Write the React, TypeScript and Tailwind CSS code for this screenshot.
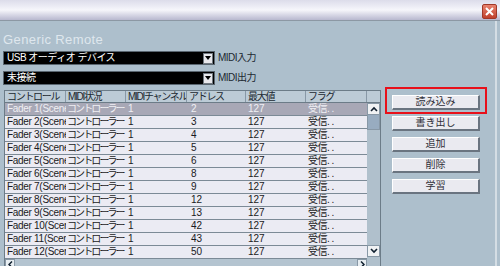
const rows = [
  { name: "Fader 1(Scene 1)", addr: "2" },
  { name: "Fader 2(Scene 1)", addr: "3" },
  { name: "Fader 3(Scene 1)", addr: "4" },
  { name: "Fader 4(Scene 1)", addr: "5" },
  { name: "Fader 5(Scene 1)", addr: "6" },
  { name: "Fader 6(Scene 1)", addr: "8" },
  { name: "Fader 7(Scene 1)", addr: "9" },
  { name: "Fader 8(Scene 1)", addr: "12" },
  { name: "Fader 9(Scene 1)", addr: "13" },
  { name: "Fader 10(Scene 1)", addr: "42" },
  { name: "Fader 11(Scene 1)", addr: "43" },
  { name: "Fader 12(Scene 1)", addr: "50" },
];

const cols = ["コントロール", "MIDI状況", "MIDIチャンネル", "アドレス", "最大値", "フラグ"];
const widths = ["w-[61px]", "w-[60px]", "w-[61px]", "w-[59px]", "w-[60px]", "w-[61px]"];

const font = { fontFamily: '"Liberation Sans", "Noto Sans CJK JP", sans-serif' };

const Dropdown = ({ value, label }: { value: string; label: string }) => (
  <div className="flex items-center h-[14px] gap-[3px]">
    <div className="w-[212px] h-[14px] bg-black border border-[#5a6670] flex items-center justify-between">
      <span className="text-white text-[10px] pl-[3px] leading-none tracking-[-0.5px]">{value}</span>
      <span className="w-[10px] h-[11px] bg-[#e8e8ec] border border-[#707880] flex items-center justify-center mr-[1px]">
        <svg width="6" height="4" viewBox="0 0 6 4"><path d="M0 0h6L3 4z" fill="#000" /></svg>
      </span>
    </div>
    <span className="text-[10px] text-[#202830] leading-none tracking-[-0.5px]">{label}</span>
  </div>
);

const Btn = ({ text }: { text: string }) => (
  <div className="w-[88px] h-[15px] bg-[#eaeaf0] border-t border-l border-[#ffffff] border-r-2 border-b-2 border-r-[#6a7480] border-b-[#6a7480] flex items-center justify-center text-[10px] text-[#303038] leading-none">
    {text}
  </div>
);

const Arrow = ({ d }: { d: string }) => (
  <svg width="8" height="6" viewBox="0 0 8 6"><path d={d} stroke="#102030" strokeWidth="1.6" fill="none" /></svg>
);

const cellClass = [
  "tracking-[-0.3px] pl-[2px]",
  "tracking-[-1.9px] pl-[1px]",
  "pl-[2px]",
  "pl-[4px]",
  "pl-[2px]",
  "tracking-[-0.5px] pl-[2px]",
];

export default function App() {
  return (
    <div className="w-[500px] h-[266px] overflow-hidden flex flex-col bg-[#adbfcc]" style={font}>
      <div className="h-[21px] shrink-0 bg-gradient-to-b from-[#dcdcea] via-[#f6f6fb] to-[#b8b8cf] border-b border-[#8c98a4] flex justify-end items-start pr-[3px] pt-[4px]">
        <div className="w-[15px] h-[15px] rounded-[2px] bg-gradient-to-b from-[#e8826e] to-[#c0402c] border border-[#a03828] flex items-center justify-center">
          <svg width="9" height="9" viewBox="0 0 9 9"><path d="M1 1l7 7M8 1L1 8" stroke="#fff" strokeWidth="2" /></svg>
        </div>
      </div>
      <div className="flex-1 flex border-r-2 border-[#d4dde4] mr-[3px] pl-[3px]">
        <div className="flex flex-col">
          <div className="text-[13px] text-[#dfe7ee] leading-none mt-[12px] tracking-[0.4px]">Generic Remote</div>
          <div className="mt-[5px] flex flex-col gap-[6px]">
            <Dropdown value="USB オーディオ デバイス" label="MIDI入力" />
            <Dropdown value="未接続" label="MIDI出力" />
          </div>
          <div className="mt-[5px] ml-[1px] flex">
            <div className="flex flex-col w-[363px] border-l border-t border-[#6c7c88]">
              <div className="flex h-[12px] bg-[#bccbd6] border-b border-[#6c7c88]">
                {cols.map((c, i) => (
                  <div key={c} className={`${widths[i]} shrink-0 border-r border-[#8898a6] text-[10px] text-[#202830] leading-[12px] pl-[2px] whitespace-nowrap overflow-hidden tracking-[-1.3px]`}>
                    {c}
                  </div>
                ))}
              </div>
              {rows.map((r, i) => {
                const sel = i === 0;
                const cells = [r.name, "コントローラー", "1", r.addr, "127", "受信. ."];
                return (
                  <div key={r.name} className={`flex h-[13px] border-b border-[#7c8a96] ${sel ? "bg-[#a8a8b6] text-[#f0f0f4]" : "bg-[#ebebf3] text-[#1a1a22]"}`}>
                    {cells.map((c, j) => (
                      <div key={j} className={`${widths[j]} shrink-0 text-[10px] leading-[12px] whitespace-nowrap overflow-hidden ${cellClass[j]}`}>
                        {c}
                      </div>
                    ))}
                  </div>
                );
              })}
              <div className="flex h-[10px] bg-[#b4c4d0]">
                <div className="w-[10px] h-[10px] bg-[#e8eef2] border border-[#8898a6] flex items-center justify-center">
                  <svg width="5" height="7" viewBox="0 0 5 7"><path d="M4 0.5L1 3.5 4 6.5" stroke="#102030" strokeWidth="1.5" fill="none" /></svg>
                </div>
                <div className="flex-1" />
                <div className="w-[10px] h-[10px] bg-[#e8eef2] border border-[#8898a6] flex items-center justify-center">
                  <svg width="5" height="7" viewBox="0 0 5 7"><path d="M1 0.5L4 3.5 1 6.5" stroke="#102030" strokeWidth="1.5" fill="none" /></svg>
                </div>
              </div>
            </div>
            <div className="w-[14px] flex flex-col border-t border-r border-[#6c7c88] bg-[#b0c0cc]">
              <div className="h-[12px] bg-[#bccbd6] border-b border-[#6c7c88]" />
              <div className="h-[12px] bg-[#f0f2f4] border border-[#8898a6] flex items-center justify-center">
                <Arrow d="M1 5L4 2 7 5" />
              </div>
              <div className="h-[15px] bg-[#98acc0] border-x border-b border-[#8898a6]" />
              <div className="h-[115px]" />
              <div className="h-[12px] bg-[#f0f2f4] border border-[#8898a6] flex items-center justify-center">
                <Arrow d="M1 1L4 4 7 1" />
              </div>
            </div>
          </div>
        </div>
        <div className="ml-[4px] mt-[66px] self-start">
          <div className="border-2 border-[#e8101a] px-[5px] pt-[6px] pb-[2px]">
            <Btn text="読み込み" />
          </div>
          <div className="flex flex-col gap-[6px] pl-[7px] mt-[2px]">
            <Btn text="書き出し" />
            <Btn text="追加" />
            <Btn text="削除" />
            <Btn text="学習" />
          </div>
        </div>
      </div>
    </div>
  );
}
